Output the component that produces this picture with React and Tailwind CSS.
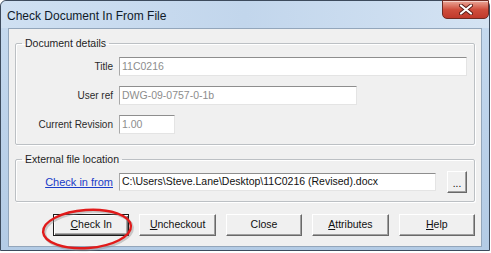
import React from "react";

const Btn = ({ children, isDefault }) => (
  <div
    className={`w-[78px] h-[22px] flex items-center justify-center text-[10.5px] text-[#111] bg-[#f0f0f0] ${
      isDefault
        ? "border border-[#1c1c1c] shadow-[inset_1px_1px_0_#ffffff,inset_-1px_-1px_0_#6b6b6b,inset_-2px_-2px_0_#a8a8a8]"
        : "border border-t-white border-l-white border-r-[#696969] border-b-[#696969] shadow-[inset_-1px_-1px_0_#a0a0a0]"
    }`}
  >
    {children}
  </div>
);

const Group = ({ title, children, className }) => (
  <fieldset
    className={`border border-[#bcc0c4] rounded-[2px] shadow-[inset_1px_1px_0_#ffffff,1px_1px_0_#ffffff] ${className}`}
  >
    <legend className="ml-[6px] px-[3px] text-[10.5px] leading-[13px] text-[#1e1e1e]">{title}</legend>
    {children}
  </fieldset>
);

const Field = ({ value, w, muted = true, h = "h-[19px]" }) => (
  <div
    className={`${w} ${h} bg-white border border-t-[#8e8e8e] border-l-[#a9a9a9] border-r-[#e4e4e4] border-b-[#e4e4e4] flex items-center pl-[2px] text-[10.5px] whitespace-nowrap overflow-hidden ${
      muted ? "text-[#8d8d8d]" : "text-[#111]"
    }`}
  >
    {value}
  </div>
);

const Row = ({ label, children }) => (
  <div className="flex items-center gap-[6px]">
    <div className="w-[97px] text-right text-[10px] text-[#2a2a2a]">{label}</div>
    {children}
  </div>
);

export default function App() {
  return (
    <div className="w-[491px] h-[253px] bg-white font-['Liberation_Sans',Arial,sans-serif]">
      <div className="relative w-[490px] h-[251px] border border-[#3d4b5d] rounded-t-[6px] bg-gradient-to-b from-[#c7dbf0] via-[#bcd2ea] to-[#b3cbe5] flex flex-col">
        <div className="h-[27px] flex items-start justify-between pl-[6px] rounded-t-[6px] bg-gradient-to-r from-[#cfe0f2] via-[#c2d6ec] to-[#d4e3f3]">
          <span className="mt-[6px] text-[12px] text-[#0f1a2a]">Check Document In From File</span>
          <div className="w-[47px] h-[19px] -mt-[1px] rounded-b-[5px] border border-[#6e2a22] bg-gradient-to-b from-[#e9a597] via-[#cf4e3d] to-[#c0392b] flex items-center justify-center shadow-[inset_0_1px_0_rgba(255,255,255,0.5)]">
            <svg width="14" height="11" viewBox="0 0 14 11">
              <path d="M2 1.5 L12 9.5 M12 1.5 L2 9.5" stroke="#5a1c16" strokeWidth="4" strokeLinecap="round" />
              <path d="M2 1.5 L12 9.5 M12 1.5 L2 9.5" stroke="#ffffff" strokeWidth="2.2" strokeLinecap="round" />
            </svg>
          </div>
        </div>

        <div className="flex-1 mx-[7px] mb-[3px] border border-[#93a6bb] bg-[#f0f0f0] px-[6px] pt-[8px] flex flex-col">
          <Group title="Document details" className="pt-[7px] pb-[10px]">
            <div className="flex flex-col gap-[10px]">
              <Row label="Title">
                <Field value="11C0216" w="w-[348px]" />
              </Row>
              <Row label="User ref">
                <Field value="DWG-09-0757-0-1b" w="w-[238px]" />
              </Row>
              <Row label="Current Revision">
                <Field value="1.00" w="w-[56px]" />
              </Row>
            </div>
          </Group>

          <Group title="External file location" className="mt-[8px] pt-[5px] pb-[8px]">
            <div className="flex items-center">
              <div className="w-[97px] text-right text-[11px] text-[#1a3cc8] underline">Check in from</div>
              <div className="ml-[6px]">
                <Field value="C:\Users\Steve.Lane\Desktop\11C0216 (Revised).docx" w="w-[317px]" h="h-[18px]" muted={false} />
              </div>
              <div className="ml-[11px] w-[20px] h-[22px] flex items-end justify-center pb-[5px] text-[10px] leading-[6px] text-black bg-[#f0f0f0] border border-t-white border-l-white border-r-[#696969] border-b-[#696969] shadow-[inset_-1px_-1px_0_#a0a0a0]">
                ...
              </div>
            </div>
          </Group>

          <div className="mt-[12px] pl-[38px] flex gap-[10px]">
            <Btn isDefault>
              <span><span className="underline">C</span>heck In</span>
            </Btn>
            <Btn>
              <span><span className="underline">U</span>ncheckout</span>
            </Btn>
            <Btn>Close</Btn>
            <Btn>
              <span><span className="underline">A</span>ttributes</span>
            </Btn>
            <Btn>
              <span><span className="underline">H</span>elp</span>
            </Btn>
          </div>
        </div>

        <svg className="absolute left-[36px] top-[203px] pointer-events-none" width="100" height="50" viewBox="0 0 100 50">
          <ellipse cx="51.5" cy="26.5" rx="44" ry="19" transform="rotate(-4 51.5 26.5)" fill="none" stroke="#8a8a8a" strokeOpacity="0.4" strokeWidth="3" />
          <ellipse cx="50" cy="25" rx="44" ry="19" transform="rotate(-4 50 25)" fill="none" stroke="#e11b1b" strokeWidth="2.4" />
        </svg>
      </div>
    </div>
  );
}
